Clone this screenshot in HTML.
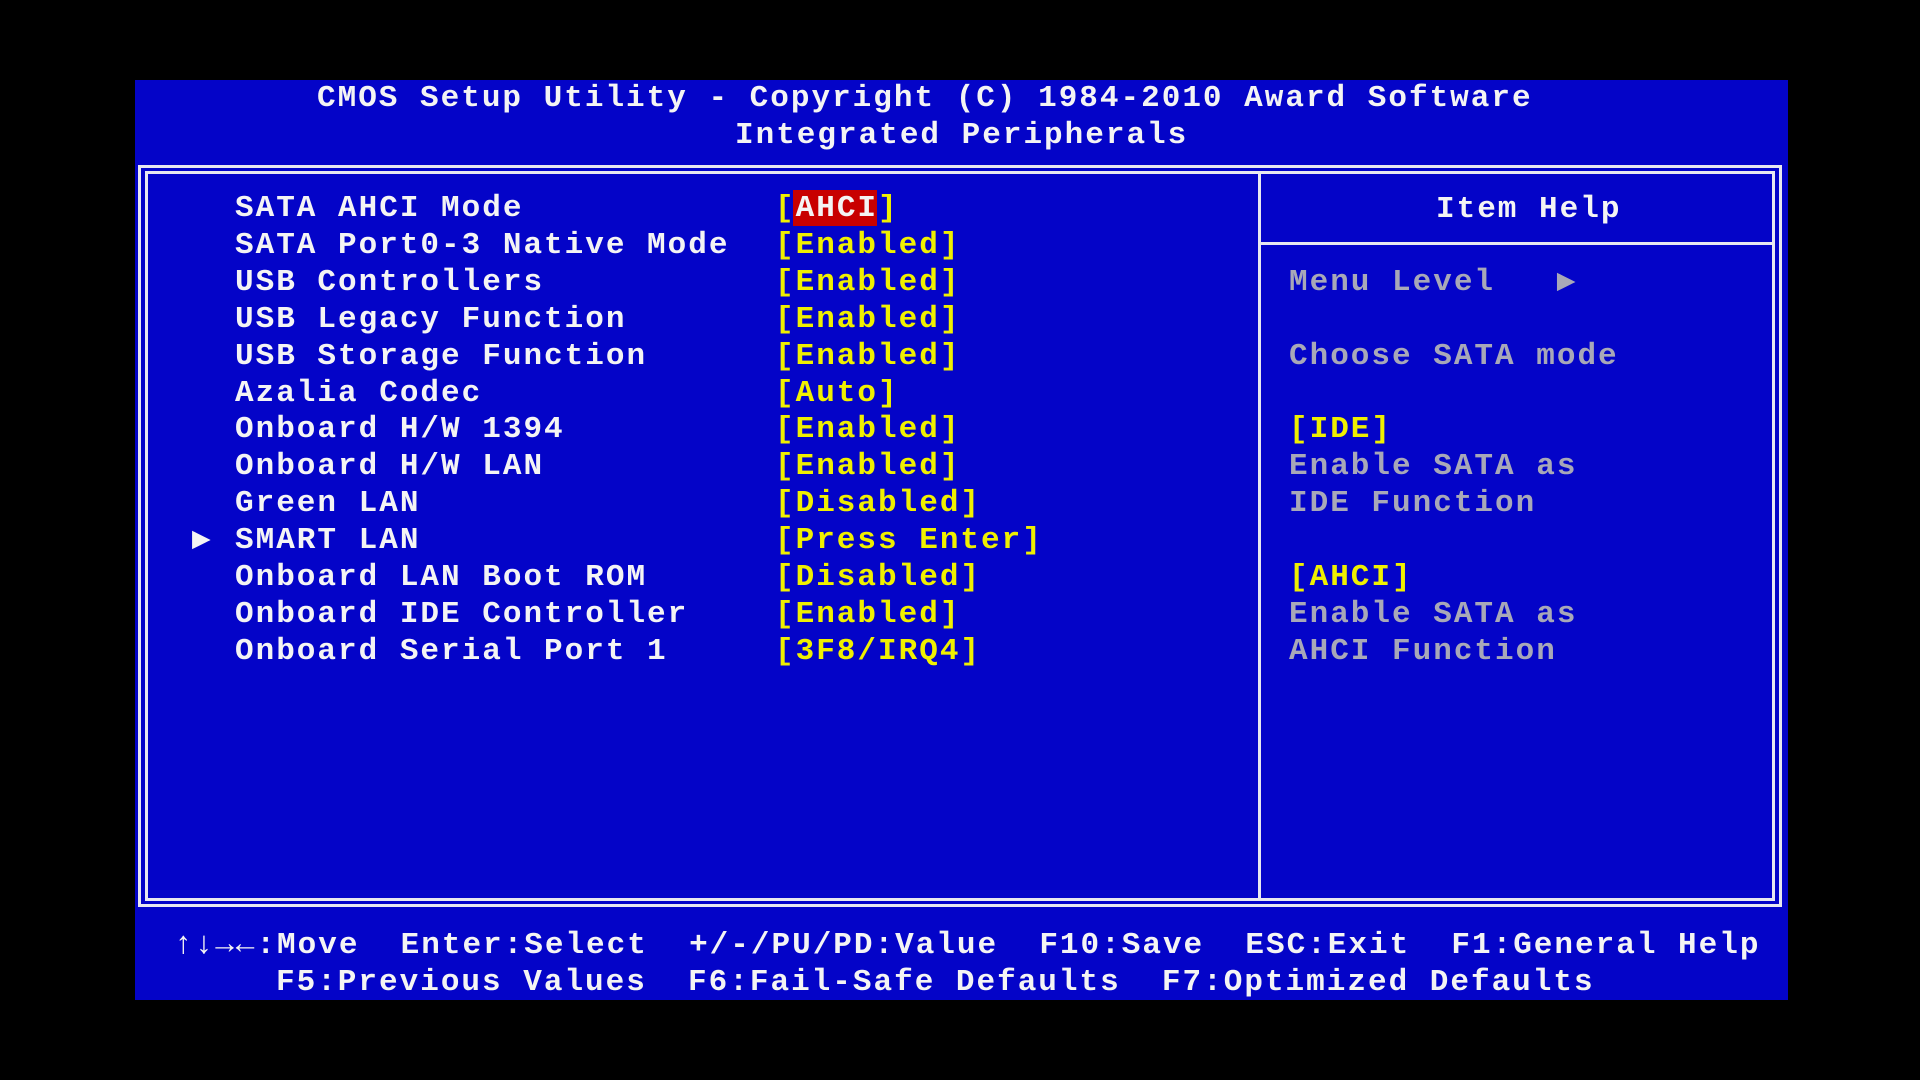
<!DOCTYPE html>
<html><head><meta charset="utf-8"><style>
html,body{margin:0;padding:0;background:#000;width:1920px;height:1080px;overflow:hidden}
#b{position:absolute;left:135px;top:80px;width:1653px;height:920px;background:#0404c8}
.t{position:absolute;font-family:"Liberation Mono","DejaVu Sans Mono",monospace;font-weight:bold;font-size:31px;line-height:36px;white-space:pre;color:#f4f4f4;letter-spacing:2px}
.y{color:#f0f000}.g{color:#a8a8b8}
.l{position:absolute;background:#e8e8f0}
</style></head><body>
<div id="b"></div>
<div class="l" style="left:138px;top:165px;width:1644px;height:3px"></div>
<div class="l" style="left:138px;top:904px;width:1644px;height:3px"></div>
<div class="l" style="left:138px;top:165px;width:3px;height:742px"></div>
<div class="l" style="left:1779px;top:165px;width:3px;height:742px"></div>
<div class="l" style="left:145px;top:171px;width:1630px;height:3px"></div>
<div class="l" style="left:145px;top:898px;width:1630px;height:3px"></div>
<div class="l" style="left:145px;top:171px;width:3px;height:730px"></div>
<div class="l" style="left:1772px;top:171px;width:3px;height:730px"></div>
<div class="l" style="left:1258px;top:171px;width:3px;height:730px"></div>
<div class="l" style="left:1258px;top:242px;width:517px;height:3px"></div>

<div class="t" style="left:317px;top:81px">CMOS Setup Utility - Copyright (C) 1984-2010 Award Software</div>
<div class="t" style="left:735px;top:118px">Integrated Peripherals</div>

<div style="position:absolute;left:793px;top:190px;width:84px;height:36px;background:#c80000"></div>
<div class="t" style="left:235px;top:191px">SATA AHCI Mode</div>
<div class="t" style="left:235px;top:228px">SATA Port0-3 Native Mode</div>
<div class="t" style="left:235px;top:265px">USB Controllers</div>
<div class="t" style="left:235px;top:302px">USB Legacy Function</div>
<div class="t" style="left:235px;top:339px">USB Storage Function</div>
<div class="t" style="left:235px;top:376px">Azalia Codec</div>
<div class="t" style="left:235px;top:412px">Onboard H/W 1394</div>
<div class="t" style="left:235px;top:449px">Onboard H/W LAN</div>
<div class="t" style="left:235px;top:486px">Green LAN</div>
<div class="t" style="left:192px;top:523px">▶</div>
<div class="t" style="left:235px;top:523px">SMART LAN</div>
<div class="t" style="left:235px;top:560px">Onboard LAN Boot ROM</div>
<div class="t" style="left:235px;top:597px">Onboard IDE Controller</div>
<div class="t" style="left:235px;top:634px">Onboard Serial Port 1</div>

<div class="t y" style="left:775px;top:191px">[<span style="color:#f4f4f4">AHCI</span>]</div>
<div class="t y" style="left:775px;top:228px">[Enabled]</div>
<div class="t y" style="left:775px;top:265px">[Enabled]</div>
<div class="t y" style="left:775px;top:302px">[Enabled]</div>
<div class="t y" style="left:775px;top:339px">[Enabled]</div>
<div class="t y" style="left:775px;top:376px">[Auto]</div>
<div class="t y" style="left:775px;top:412px">[Enabled]</div>
<div class="t y" style="left:775px;top:449px">[Enabled]</div>
<div class="t y" style="left:775px;top:486px">[Disabled]</div>
<div class="t y" style="left:775px;top:523px">[Press Enter]</div>
<div class="t y" style="left:775px;top:560px">[Disabled]</div>
<div class="t y" style="left:775px;top:597px">[Enabled]</div>
<div class="t y" style="left:775px;top:634px">[3F8/IRQ4]</div>

<div class="t" style="left:1436px;top:192px">Item Help</div>
<div class="t g" style="left:1289px;top:265px">Menu Level   ▶</div>
<div class="t g" style="left:1289px;top:339px">Choose SATA mode</div>
<div class="t y" style="left:1289px;top:412px">[IDE]</div>
<div class="t g" style="left:1289px;top:449px">Enable SATA as</div>
<div class="t g" style="left:1289px;top:486px">IDE Function</div>
<div class="t y" style="left:1289px;top:560px">[AHCI]</div>
<div class="t g" style="left:1289px;top:597px">Enable SATA as</div>
<div class="t g" style="left:1289px;top:634px">AHCI Function</div>

<div class="t" style="left:174px;top:928px">↑↓→←:Move  Enter:Select  +/-/PU/PD:Value  F10:Save  ESC:Exit  F1:General Help</div>
<div class="t" style="left:276px;top:965px">F5:Previous Values  F6:Fail-Safe Defaults  F7:Optimized Defaults</div>
</body></html>
